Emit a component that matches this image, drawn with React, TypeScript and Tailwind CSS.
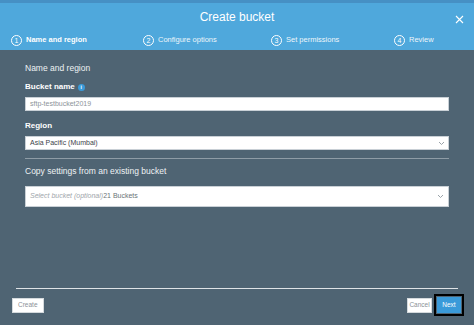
import React from "react";

const Chevron = () => (
  <svg width="7" height="5" viewBox="0 0 7 5" className="shrink-0">
    <path d="M1 1 L3.5 3.5 L6 1" fill="none" stroke="#9aa3a9" strokeWidth="1" />
  </svg>
);

const Step = ({ n, label, bold, w }: { n: number; label: string; bold?: boolean; w: string }) => (
  <div className={`flex items-center gap-[4px] ${w}`}>
    <div className="w-[11px] h-[11px] rounded-full border border-white flex items-center justify-center text-[7px] leading-none text-white">
      {n}
    </div>
    <span className={`text-[7.5px] text-white ${bold ? "font-bold" : "opacity-90"}`}>{label}</span>
  </div>
);

export default function App() {
  return (
    <div
      className="w-[474px] h-[325px] bg-[#4f6473] flex flex-col overflow-hidden"
      style={{ fontFamily: '"Liberation Sans", Arial, sans-serif' }}
    >
      <div className="h-[3px] bg-[#4690c4] shrink-0" />
      <div className="h-[47px] bg-[#4fa8dc] shrink-0 flex flex-col relative">
        <div className="h-[30px] flex items-center justify-center relative">
          <span className="text-white text-[12px] mt-[-2px]">Create bucket</span>
          <svg
            width="9"
            height="9"
            viewBox="0 0 9 9"
            className="absolute right-[10px] top-[12px]"
          >
            <path d="M1 1 L8 8 M8 1 L1 8" stroke="white" strokeWidth="1.1" fill="none" />
          </svg>
        </div>
        <div className="flex items-center pl-[11px] h-[14px]">
          <Step n={1} label="Name and region" bold w="w-[132px]" />
          <Step n={2} label="Configure options" w="w-[128px]" />
          <Step n={3} label="Set permissions" w="w-[123px]" />
          <Step n={4} label="Review" w="w-[60px]" />
        </div>
      </div>

      <div className="px-[25px] flex flex-col">
        <div className="mt-[12px] h-[12px] text-[8.5px] leading-[12px] text-[#eef2f4]">Name and region</div>
        <div className="mt-[7px] h-[12px] flex items-center gap-[3px] text-[8px] font-bold text-white">
          Bucket name
          <span className="w-[7px] h-[7px] rounded-full bg-[#3a9ad9] text-white text-[5px] leading-[7px] text-center font-bold">
            i
          </span>
        </div>
        <div className="mt-[4px] h-[14px] bg-white border border-[#c9d0d6] flex items-center px-[4px] text-[7px] text-[#8c9399]">
          sftp-testbucket2019
        </div>
        <div className="mt-[9px] h-[12px] leading-[12px] text-[8px] font-bold text-white">Region</div>
        <div className="mt-[4px] h-[14px] bg-white border border-[#c9d0d6] flex items-center justify-between pl-[4px] pr-[3px] text-[7px] text-[#3d4449]">
          <span>Asia Pacific (Mumbai)</span>
          <Chevron />
        </div>
        <div className="mt-[8px] h-[1px] bg-[#8e9ca6]" />
        <div className="mt-[6px] h-[12px] leading-[12px] text-[8.5px] text-[#eef2f4]">
          Copy settings from an existing bucket
        </div>
        <div className="mt-[9px] h-[21px] bg-white border border-[#c9d0d6] flex items-center justify-between pl-[4px] pr-[4px] text-[7px]">
          <span>
            <span className="italic text-[#a0a6ab]">Select bucket (optional)</span>
            <span className="text-[#6b7378]">21 Buckets</span>
          </span>
          <Chevron />
        </div>
      </div>

      <div className="mt-auto flex flex-col pb-[9px]">
        <div className="mx-[16px] h-[1px] bg-[#dfe3e6]" />
        <div className="mt-[5px] px-[10px] flex items-center justify-between">
          <button className="ml-[2px] h-[15px] px-[5px] bg-white text-[6.5px] text-[#8a9197] border border-[#d5dadd]">
            Create
          </button>
          <div className="flex items-center gap-[2px]">
            <button className="h-[15px] w-[25px] bg-white text-[6.5px] text-[#8a9197] border border-[#d5dadd]">
              Cancel
            </button>
            <div className="border-2 border-black p-[1px]">
              <button className="h-[16px] w-[24px] bg-[#3a9ad9] text-[6.5px] text-white block">Next</button>
            </div>
          </div>
        </div>
      </div>
    </div>
  );
}
